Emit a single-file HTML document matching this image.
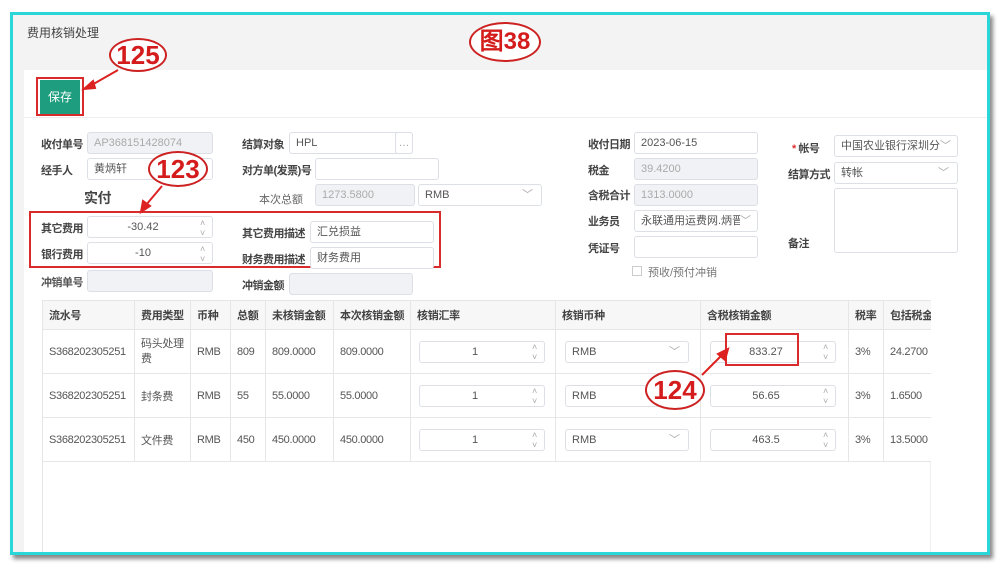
<!DOCTYPE html><html><head><meta charset="utf-8"><style>
*{box-sizing:border-box;margin:0;padding:0}
body{width:1000px;height:564px;background:#fff;position:relative;overflow:hidden;font-family:"Liberation Sans","Noto Sans CJK SC",sans-serif;font-size:12px;color:#333}
.a{position:absolute}
.frame{left:10px;top:12px;width:980px;height:543px;border:3px solid #2ad6d8;background:#f3f3f3;box-shadow:3px 4px 4px #888}
.in{position:absolute;border:1px solid #dcdfe6;border-radius:3px;background:#fff;height:22px;line-height:20px;padding-left:6px;font-size:11px;color:#555;white-space:nowrap;overflow:hidden}
.dis{background:#f0f2f5;color:#aaa}
.lb{position:absolute;font-size:11px;color:#444;font-weight:bold;letter-spacing:-0.5px;white-space:nowrap}
.red{position:absolute;border:2px solid #d92b2b}
.circ{position:absolute;border:2px solid #c22;border-radius:50%;background:#fff;color:#d41c1c;font-weight:bold;text-align:center;font-family:"Liberation Sans",sans-serif}
.chev{position:absolute;color:#aaa;font-size:9px;line-height:10px}
table{table-layout:fixed}
td,th{border-right:1px solid #e6e6e6;border-bottom:1px solid #e6e6e6;font-size:11px;color:#555;text-align:left;padding-left:6px;font-weight:normal;white-space:nowrap;overflow:hidden;letter-spacing:-0.3px}
th{background:#f7f7f7;height:29px;color:#444;font-weight:bold}
td{height:44px}
</style></head><body>
<div class="a frame"></div>
<div class="a" style="left:27px;top:24px;font-size:12px;color:#444">费用核销处理</div>
<div class="a" style="left:24px;top:70px;width:963px;height:482px;background:#fff"></div>
<div class="a" style="left:24px;top:117px;width:963px;height:1px;background:#eee"></div>
<div class="a" style="left:40px;top:80px;width:40px;height:34px;background:#1e9e7e;color:#fff;text-align:center;line-height:34px;font-size:12px">保存</div>
<div class="red" style="left:36px;top:77px;width:48px;height:39px"></div>
<div class="circ" style="left:109px;top:38px;width:58px;height:34px;font-size:26px;line-height:30px">125</div>
<svg class="a" style="left:0;top:0;z-index:5" width="1000" height="564"><g stroke="#d22" stroke-width="2" fill="#d22"><line x1="118" y1="70" x2="90" y2="86"/><polygon points="84,89 93,81 95,88"/><line x1="162" y1="186" x2="146" y2="205"/><polygon points="141,212 143,201 150,206"/><line x1="702" y1="375" x2="722" y2="355"/><polygon points="728,349 725,360 718,354"/></g></svg>
<div class="circ" style="left:469px;top:22px;width:72px;height:40px;font-size:24px;line-height:36px">图38</div>

<div class="lb" style="left:41px;top:136px">收付单号</div><div class="in dis" style="left:87px;top:132px;width:126px">AP368151428074</div>
<div class="lb" style="left:41px;top:162px">经手人</div><div class="in" style="left:87px;top:158px;width:126px">黄炳轩</div>
<div class="lb" style="left:84px;top:188px;font-size:14px">实付</div>
<div class="lb" style="left:41px;top:220px">其它费用</div><div class="in" style="left:87px;top:216px;width:126px;text-align:center;padding-right:20px">-30.42</div>
<div class="lb" style="left:41px;top:246px">银行费用</div><div class="in" style="left:87px;top:242px;width:126px;text-align:center;padding-right:20px">-10</div>
<div class="chev" style="left:200px;top:218px">˄<br>˅</div><div class="chev" style="left:200px;top:244px">˄<br>˅</div>
<div class="lb" style="left:41px;top:274px;color:#555">冲销单号</div><div class="in dis" style="left:87px;top:270px;width:126px"></div>
<div class="red" style="left:29px;top:211px;width:412px;height:57px"></div>
<div class="circ" style="left:148px;top:151px;width:60px;height:36px;font-size:26px;line-height:32px">123</div>

<div class="lb" style="left:242px;top:136px">结算对象</div><div class="in" style="left:289px;top:132px;width:124px">HPL</div><div class="in" style="left:395px;top:132px;width:18px;color:#aaa;padding:0;text-align:center">…</div>
<div class="lb" style="left:242px;top:162px">对方单(发票)号</div><div class="in" style="left:315px;top:158px;width:124px"></div>
<div class="a" style="left:259px;top:191px;color:#666;font-size:11px">本次总额</div><div class="in dis" style="left:315px;top:184px;width:100px">1273.5800</div><div class="in" style="left:418px;top:184px;width:124px">RMB<span style="position:absolute;right:8px;color:#aaa">﹀</span></div>
<div class="lb" style="left:242px;top:225px">其它费用描述</div><div class="in" style="left:310px;top:221px;width:124px">汇兑损益</div>
<div class="lb" style="left:242px;top:251px">财务费用描述</div><div class="in" style="left:310px;top:247px;width:124px">财务费用</div>
<div class="lb" style="left:242px;top:277px">冲销金额</div><div class="in dis" style="left:289px;top:273px;width:124px"></div>

<div class="lb" style="left:588px;top:136px">收付日期</div><div class="in" style="left:634px;top:132px;width:124px">2023-06-15</div>
<div class="lb" style="left:588px;top:162px">税金</div><div class="in dis" style="left:634px;top:158px;width:124px">39.4200</div>
<div class="lb" style="left:588px;top:187px">含税合计</div><div class="in dis" style="left:634px;top:184px;width:124px">1313.0000</div>
<div class="lb" style="left:588px;top:213px">业务员</div><div class="in" style="left:634px;top:210px;width:124px;padding-right:20px">永联通用运费网.炳晋<span style="position:absolute;right:6px;top:0;background:#fff;color:#aaa">﹀</span></div>
<div class="lb" style="left:588px;top:240px">凭证号</div><div class="in" style="left:634px;top:236px;width:124px"></div>
<div class="a" style="left:632px;top:266px;width:10px;height:10px;border:1px solid #ccc"></div><div class="a" style="left:648px;top:264px;color:#777;font-size:11px">预收/预付冲销</div>
<div class="lb" style="left:792px;top:140px"><span style="color:#d33">*</span> 帐号</div><div class="in" style="left:834px;top:135px;width:124px">中国农业银行深圳分<span style="position:absolute;right:6px;top:0;background:#fff;color:#aaa">﹀</span></div>
<div class="lb" style="left:788px;top:166px">结算方式</div><div class="in" style="left:834px;top:162px;width:124px">转帐<span style="position:absolute;right:8px;color:#aaa">﹀</span></div>
<div class="in" style="left:834px;top:188px;width:124px;height:65px"></div>
<div class="lb" style="left:788px;top:235px">备注</div>

<table class="a" style="left:42px;top:300px;width:888px;border-collapse:collapse;border-top:1px solid #e6e6e6;border-left:1px solid #e6e6e6">
<colgroup><col style="width:92px"><col style="width:56px"><col style="width:40px"><col style="width:35px"><col style="width:68px"><col style="width:77px"><col style="width:145px"><col style="width:145px"><col style="width:148px"><col style="width:35px"><col style="width:47px"></colgroup>
<tr><th>流水号</th><th>费用类型</th><th>币种</th><th>总额</th><th>未核销金额</th><th>本次核销金额</th><th>核销汇率</th><th>核销币种</th><th>含税核销金额</th><th>税率</th><th style="border-right:none">包括税金</th></tr>
<tr><td>S368202305251</td><td style="white-space:normal;line-height:15px">码头处理<br>费</td><td>RMB</td><td>809</td><td>809.0000</td><td>809.0000</td><td></td><td></td><td></td><td>3%</td><td style="border-right:none">24.2700</td></tr>
<tr><td>S368202305251</td><td>封条费</td><td>RMB</td><td>55</td><td>55.0000</td><td>55.0000</td><td></td><td></td><td></td><td>3%</td><td style="border-right:none">1.6500</td></tr>
<tr><td>S368202305251</td><td>文件费</td><td>RMB</td><td>450</td><td>450.0000</td><td>450.0000</td><td></td><td></td><td></td><td>3%</td><td style="border-right:none">13.5000</td></tr>
</table>
<div class="a" style="left:42px;top:462px;width:1px;height:90px;background:#e6e6e6"></div>
<div class="a" style="left:930px;top:462px;width:1px;height:90px;background:#eee"></div>

<div class="in" style="left:419px;top:341px;width:126px;text-align:center;padding-right:20px">1</div><div class="chev" style="left:532px;top:342px">˄<br>˅</div>
<div class="in" style="left:419px;top:385px;width:126px;text-align:center;padding-right:20px">1</div><div class="chev" style="left:532px;top:386px">˄<br>˅</div>
<div class="in" style="left:419px;top:429px;width:126px;text-align:center;padding-right:20px">1</div><div class="chev" style="left:532px;top:430px">˄<br>˅</div>
<div class="in" style="left:565px;top:341px;width:124px">RMB<span style="position:absolute;right:8px;color:#aaa">﹀</span></div>
<div class="in" style="left:565px;top:385px;width:124px">RMB<span style="position:absolute;right:8px;color:#aaa">﹀</span></div>
<div class="in" style="left:565px;top:429px;width:124px">RMB<span style="position:absolute;right:8px;color:#aaa">﹀</span></div>
<div class="in" style="left:710px;top:341px;width:126px;text-align:center;padding-right:20px">833.27</div><div class="chev" style="left:823px;top:342px">˄<br>˅</div>
<div class="in" style="left:710px;top:385px;width:126px;text-align:center;padding-right:20px">56.65</div><div class="chev" style="left:823px;top:386px">˄<br>˅</div>
<div class="in" style="left:710px;top:429px;width:126px;text-align:center;padding-right:20px">463.5</div><div class="chev" style="left:823px;top:430px">˄<br>˅</div>
<div class="red" style="left:725px;top:333px;width:74px;height:33px"></div>
<div class="circ" style="left:645px;top:370px;width:60px;height:40px;font-size:26px;line-height:36px">124</div>
</body></html>
